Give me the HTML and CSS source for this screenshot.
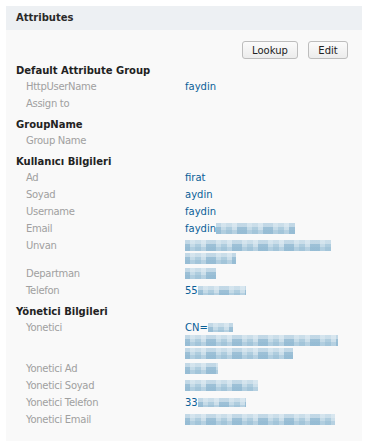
FILE: index.html
```html
<!DOCTYPE html>
<html lang="tr">
<head>
<meta charset="utf-8">
<title>Attributes</title>
<link rel="stylesheet" href="styles.css">
</head>
<body>
<div class="panel">
  <div class="panel-head">Attributes</div>
  <div class="panel-body">
    <div class="toolbar">
      <button class="btn btn-lookup">Lookup</button>
      <button class="btn btn-edit">Edit</button>
    </div>

    <h3 class="group-title">Default Attribute Group</h3>
    <dl class="attrs">
      <dt>HttpUserName</dt><dd><span class="ln">faydin</span></dd>
      <dt>Assign to</dt><dd></dd>
    </dl>

    <h3 class="group-title">GroupName</h3>
    <dl class="attrs">
      <dt>Group Name</dt><dd></dd>
    </dl>

    <h3 class="group-title">Kullanıcı Bilgileri</h3>
    <dl class="attrs">
      <dt>Ad</dt><dd><span class="ln">firat</span></dd>
      <dt>Soyad</dt><dd><span class="ln">aydin</span></dd>
      <dt>Username</dt><dd><span class="ln">faydin</span></dd>
      <dt>Email</dt><dd><span class="ln">faydin<span class="blur" style="width:79px"></span></span></dd>
      <dt>Unvan</dt><dd><span class="ln"><span class="blur" style="width:146px"></span></span><span class="ln"><span class="blur" style="width:51px"></span></span></dd>
      <dt>Departman</dt><dd><span class="ln"><span class="blur" style="width:31px"></span></span></dd>
      <dt>Telefon</dt><dd><span class="ln">55<span class="blur short" style="width:48px"></span></span></dd>
    </dl>

    <h3 class="group-title">Yönetici Bilgileri</h3>
    <dl class="attrs">
      <dt>Yonetici</dt><dd><span class="ln">CN=<span class="blur short" style="width:25px"></span></span><span class="ln"><span class="blur" style="width:153px"></span></span><span class="ln"><span class="blur" style="width:108px"></span></span></dd>
      <dt>Yonetici Ad</dt><dd><span class="ln"><span class="blur" style="width:33px"></span></span></dd>
      <dt>Yonetici Soyad</dt><dd><span class="ln"><span class="blur" style="width:73px"></span></span></dd>
      <dt>Yonetici Telefon</dt><dd><span class="ln">33<span class="blur short" style="width:48px"></span></span></dd>
      <dt>Yonetici Email</dt><dd><span class="ln"><span class="blur" style="width:150px"></span></span></dd>
    </dl>
  </div>
</div>
</body>
</html>
```

FILE: styles.css
```css
html, body {
  background: #ffffff;
}
body {
  margin: 6px;
  font-family: "DejaVu Sans", "Liberation Sans", sans-serif;
  font-size: 10px;
  color: #333;
}
.panel {
  background: #f9f9f9;
}
.panel-head {
  background: #edf0f3;
  height: 24px;
  line-height: 24px;
  padding-left: 10px;
  font-weight: bold;
  color: #2a2a2a;
}
.panel-body {
  padding: 11px 0 11px 10px;
}
.toolbar {
  display: flex;
  justify-content: flex-end;
  gap: 10px;
  padding-right: 14px;
  margin-bottom: 1px;
}
.btn {
  font-family: "DejaVu Sans", "Liberation Sans", sans-serif;
  font-size: 10px;
  color: #222;
  height: 18px;
  padding: 0;
  border: 1px solid #bdbdbd;
  border-radius: 3px;
  background: linear-gradient(#fbfbfb, #ececec);
}
.btn-lookup { width: 56px; }
.btn-edit { width: 40px; }
.group-title {
  margin: 0;
  height: 20px;
  padding-top: 3px;
  box-sizing: border-box;
  line-height: 15px;
  font-size: 10px;
  font-weight: bold;
  color: #222;
}
.attrs {
  margin: 0;
  display: grid;
  grid-template-columns: 159px 1fr;
  padding-left: 10px;
}
.attrs dt {
  line-height: 13px;
  padding-bottom: 4px;
  color: #a0a0a0;
  letter-spacing: -0.3px;
}
.attrs dd {
  margin: 0;
  padding-bottom: 2px;
  min-height: 15px;
  color: #0a6098;
}
.ln {
  display: flex;
  align-items: center;
  height: 13px;
  line-height: 13px;
}
.blur {
  display: inline-block;
  height: 11px;
  background-color: #c3d9e6;
  background-image:
    linear-gradient(180deg, rgba(225,236,243,0.55) 0 4px, transparent 4px 7px, rgba(140,182,208,0.35) 7px),
    repeating-linear-gradient(90deg, rgba(125,172,202,0.55) 0 5px, rgba(200,222,234,0.4) 5px 10px, rgba(150,190,213,0.45) 10px 16px, rgba(215,230,239,0.5) 16px 21px, rgba(110,162,196,0.45) 21px 26px);
}
.blur.short {
  height: 9px;
}
```
